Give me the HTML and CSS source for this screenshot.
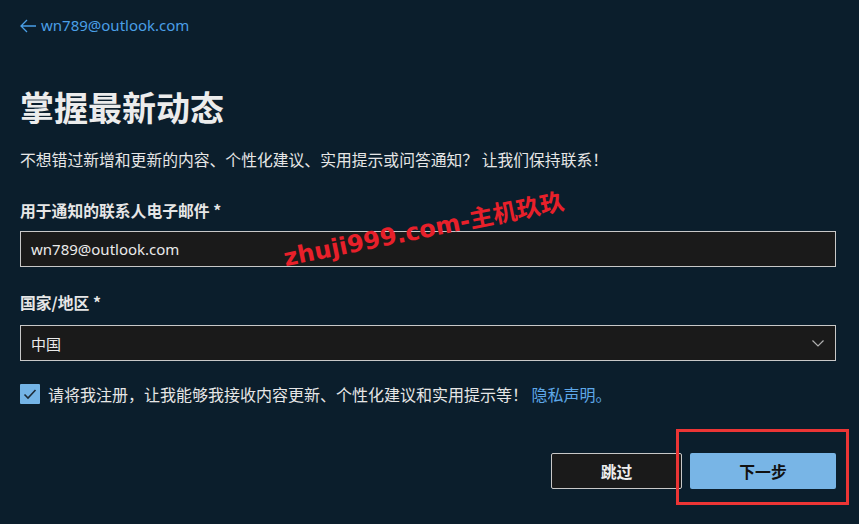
FILE: index.html
```html
<!DOCTYPE html>
<html lang="zh-CN">
<head>
<meta charset="utf-8">
<title>掌握最新动态</title>
<link rel="stylesheet" href="styles.css">
</head>
<body>
<div class="page">
  <a class="back" href="#">
    <svg class="back-icon" width="16" height="14" viewBox="0 0 16 14"><path d="M7 1 L1 7 L7 13 M1 7 H16" fill="none" stroke="currentColor" stroke-width="1.3"/></svg>
    <span>wn789@outlook.com</span>
  </a>
  <h1 class="title">掌握最新动态</h1>
  <p class="sub">不想错过新增和更新的内容、个性化建议、实用提示或问答通知？ 让我们保持联系！</p>

  <label class="label label-email">用于通知的联系人电子邮件 *</label>
  <div class="field">wn789@outlook.com</div>

  <label class="label label-country">国家/地区 *</label>
  <div class="field select">
    <span>中国</span>
    <svg class="chev" width="12" height="7" viewBox="0 0 12 7"><path d="M0.5 0.5 L6 6 L11.5 0.5" fill="none" stroke="#b0b0b0" stroke-width="1.2"/></svg>
  </div>

  <div class="check-row">
    <span class="box"><svg width="14" height="12" viewBox="0 0 14 12"><path d="M1.5 6.5 L5 10 L12.5 2" fill="none" stroke="#1d2c38" stroke-width="1.6"/></svg></span>
    <span class="check-text">请将我注册，让我能够我接收内容更新、个性化建议和实用提示等！ <a class="link" href="#">隐私声明。</a></span>
  </div>

  <div class="actions">
    <button class="btn btn-skip">跳过</button>
    <button class="btn btn-next">下一步</button>
  </div>
</div>
<div class="watermark">zhuji999.com-主机玖玖</div>
<div class="annot"></div>
</body>
</html>
```

FILE: styles.css
```css
html, body {
  margin: 0;
  padding: 0;
  background: #0b1e2c;
  width: 859px;
  height: 524px;
  overflow: hidden;
}
body {
  position: relative;
  font-family: "Noto Sans", "Noto Sans CJK SC", sans-serif;
  color: #e8e8e8;
}
.page {
  padding: 14px 23px 0 20px;
}
.back {
  display: flex;
  align-items: center;
  gap: 5px;
  height: 22px;
  color: #4a9fe6;
  text-decoration: none;
  font-size: 15px;
  line-height: 22px;
}
.back-icon { margin-top: 1px; }
.title {
  margin: 49px 0 0;
  font-size: 34px;
  line-height: 44px;
  font-weight: 700;
  color: #ececec;
  font-family: "Noto Sans CJK SC", sans-serif;
}
.sub {
  margin: 19px 0 0;
  font-size: 15.8px;
  line-height: 24px;
  font-family: "Noto Sans CJK SC", sans-serif;
  color: #e6e6e6;
}
.label {
  display: block;
  font-size: 15.8px;
  line-height: 24px;
  font-weight: 700;
  font-family: "Noto Sans CJK SC", sans-serif;
  color: #e6e6e6;
}
.label-email { margin-top: 27px; }
.label-country { margin-top: 24px; }
.field {
  box-sizing: border-box;
  height: 36px;
  border: 1px solid #c8c8c8;
  background: #1a1a1a;
  padding: 0 10px;
  display: flex;
  align-items: center;
  font-size: 15px;
  color: #eaeaea;
  margin-top: 8px;
}
.select {
  margin-top: 10px;
  justify-content: space-between;
  font-family: "Noto Sans CJK SC", sans-serif;
}
.chev { margin-right: 1px; }
.check-row {
  margin-top: 23px;
  display: flex;
  align-items: center;
  gap: 8px;
  height: 20px;
}
.box {
  width: 20px;
  height: 20px;
  background: #74b4e6;
  border-radius: 1px;
  display: flex;
  align-items: center;
  justify-content: center;
}
.check-text {
  font-size: 16px;
  line-height: 20px;
  font-family: "Noto Sans CJK SC", sans-serif;
  color: #e6e6e6;
}
.link {
  color: #5ea8e8;
  text-decoration: none;
}
.actions {
  margin-top: 49px;
  display: flex;
  justify-content: flex-end;
  gap: 8px;
}
.btn {
  box-sizing: border-box;
  height: 36px;
  font-family: "Noto Sans CJK SC", sans-serif;
  font-size: 15.8px;
  font-weight: 700;
  border-radius: 2px;
  padding: 0;
}
.btn-skip {
  width: 131px;
  background: #1a1a1a;
  border: 1px solid #c8c8c8;
  color: #ededed;
}
.btn-next {
  width: 146px;
  background: #78b5e6;
  border: none;
  color: #111;
}
.watermark {
  position: absolute;
  left: 287px;
  top: 238px;
  font-family: "DejaVu Sans", "Noto Sans CJK SC", sans-serif;
  font-weight: 600;
  font-size: 24px;
  color: #e8202a;
  transform: rotate(-11.5deg);
  transform-origin: left bottom;
  white-space: nowrap;
}
.annot {
  position: absolute;
  left: 676px;
  top: 429px;
  width: 173px;
  height: 76px;
  box-sizing: border-box;
  border: 3px solid #ec3535;
}
```
